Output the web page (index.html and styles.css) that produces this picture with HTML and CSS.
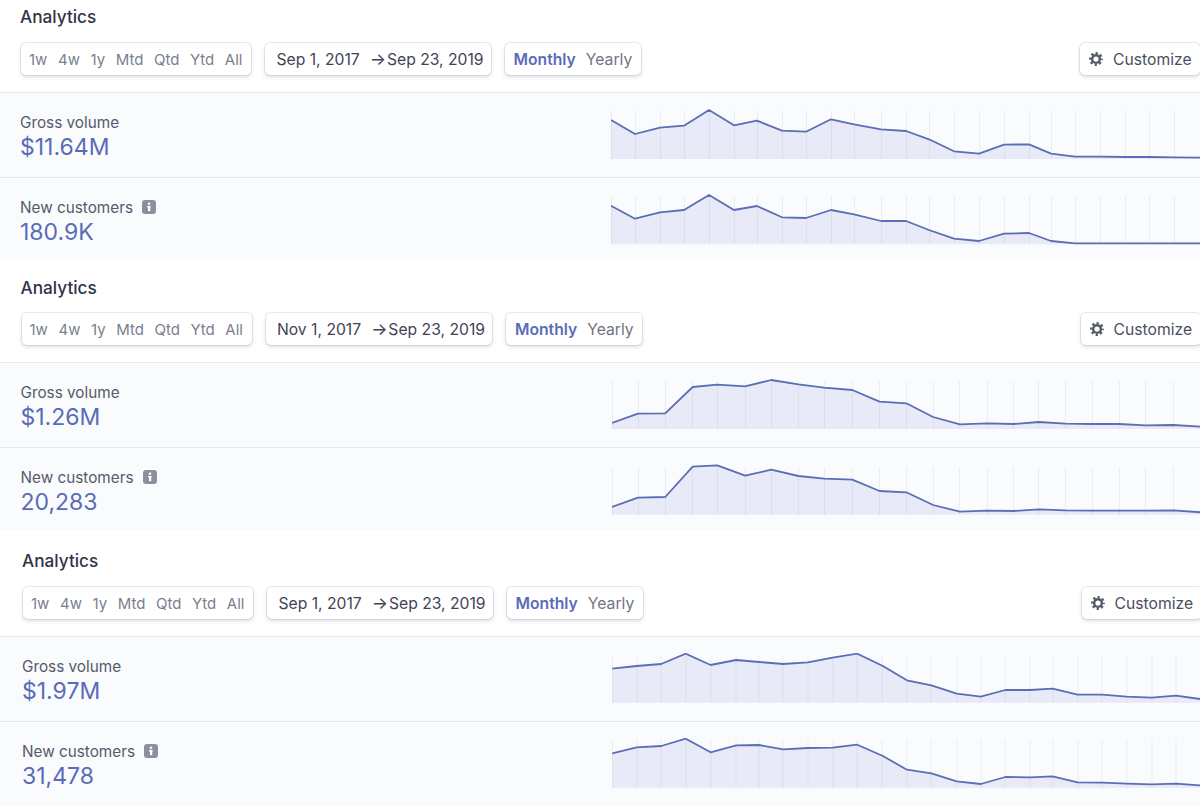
FILE: index.html
```html
<!DOCTYPE html>
<html lang="en">
<head>
  <meta charset="UTF-8">
  <title>Analytics</title>
  <link rel="stylesheet" href="styles.css">
</head>
<body>
  <svg class="defs" width="0" height="0">
    <symbol id="gear" viewBox="0 0 16 16">
      <circle cx="8" cy="8" r="4.4" fill="none" stroke="currentColor" stroke-width="2.8"/>
      <circle cx="8" cy="8" r="6.6" fill="none" stroke="currentColor" stroke-width="2.6" stroke-dasharray="2.6 2.58" stroke-dashoffset="1.3"/>
    </symbol>
    <symbol id="info" viewBox="0 0 14 14">
      <rect width="14" height="14" rx="3" fill="#8b90a0"/>
      <circle cx="7" cy="3.7" r="1.3" fill="#fff"/>
      <rect x="5" y="6" width="3.6" height="1.4" fill="#fff"/>
      <rect x="6" y="6" width="2.2" height="5.2" fill="#fff"/>
    </symbol>
  </svg>

  <section class="panel panel-top">
    <h2>Analytics</h2>
    <div class="toolbar">
      <div class="chip ranges"><span>1w</span><span>4w</span><span>1y</span><span>Mtd</span><span>Qtd</span><span>Ytd</span><span>All</span></div>
      <div class="chip dates"><span>Sep 1, 2017</span><span class="arrow">→</span><span>Sep 23, 2019</span></div>
      <div class="chip periods"><span class="active">Monthly</span><span>Yearly</span></div>
      <div class="chip customize"><svg class="gear"><use href="#gear"/></svg><span>Customize</span></div>
    </div>
    <div class="row">
      <div class="info">
        <div class="label">Gross volume</div>
        <div class="value">$11.64M</div>
      </div>
      <svg class="chart" viewBox="611 109 589 51">
        <polygon class="area" points="611,120 635,134 660,127.7 684,125.7 709,110 734,125.3 757,120.7 782,130.7 806,131.7 831,119.3 854,124.3 881,129.3 906,131 929,139.3 954,151.3 979,153.7 1004,144.7 1029,144.3 1051,153.7 1075,156.7 1100,156.7 1125,157 1149,157 1174,157.3 1200,157.7 1200,159 611,159"/>
        <path class="grid" d="M611.5 111V159M635.5 111V159M660.5 111V159M684.5 111V159M709.5 111V159M734.5 111V159M757.5 111V159M782.5 111V159M806.5 111V159M831.5 111V159M854.5 111V159M881.5 111V159M906.5 111V159M929.5 111V159M954.5 111V159M979.5 111V159M1004.5 111V159M1029.5 111V159M1051.5 111V159M1075.5 111V159M1100.5 111V159M1125.5 111V159M1149.5 111V159M1174.5 111V159"/>
        <polyline class="line" points="611,120 635,134 660,127.7 684,125.7 709,110 734,125.3 757,120.7 782,130.7 806,131.7 831,119.3 854,124.3 881,129.3 906,131 929,139.3 954,151.3 979,153.7 1004,144.7 1029,144.3 1051,153.7 1075,156.7 1100,156.7 1125,157 1149,157 1174,157.3 1200,157.7"/>
      </svg>
    </div>
    <div class="row last">
      <div class="info">
        <div class="label">New customers <svg class="info-icon"><use href="#info"/></svg></div>
        <div class="value">180.9K</div>
      </div>
      <svg class="chart" viewBox="611 194 589 51">
        <polygon class="area" points="611,205.7 635,218.7 660,212.3 684,210 709,195 734,210 757,206 782,217.3 806,218 831,210 854,214.3 881,221 906,221 929,230 954,238.7 979,241 1004,233.7 1029,233 1051,241 1075,243.3 1100,243.3 1125,243.3 1149,243.3 1174,243.3 1200,243.3 1200,244.3 611,244.3"/>
        <path class="grid" d="M611.5 196V244M635.5 196V244M660.5 196V244M684.5 196V244M709.5 196V244M734.5 196V244M757.5 196V244M782.5 196V244M806.5 196V244M831.5 196V244M854.5 196V244M881.5 196V244M906.5 196V244M929.5 196V244M954.5 196V244M979.5 196V244M1004.5 196V244M1029.5 196V244M1051.5 196V244M1075.5 196V244M1100.5 196V244M1125.5 196V244M1149.5 196V244M1174.5 196V244"/>
        <polyline class="line" points="611,205.7 635,218.7 660,212.3 684,210 709,195 734,210 757,206 782,217.3 806,218 831,210 854,214.3 881,221 906,221 929,230 954,238.7 979,241 1004,233.7 1029,233 1051,241 1075,243.3 1100,243.3 1125,243.3 1149,243.3 1174,243.3 1200,243.3"/>
      </svg>
    </div>
  </section>

  <section class="panel panel-mid">
    <h2>Analytics</h2>
    <div class="toolbar">
      <div class="chip ranges"><span>1w</span><span>4w</span><span>1y</span><span>Mtd</span><span>Qtd</span><span>Ytd</span><span>All</span></div>
      <div class="chip dates"><span>Nov 1, 2017</span><span class="arrow">→</span><span>Sep 23, 2019</span></div>
      <div class="chip periods"><span class="active">Monthly</span><span>Yearly</span></div>
      <div class="chip customize"><svg class="gear"><use href="#gear"/></svg><span>Customize</span></div>
    </div>
    <div class="row">
      <div class="info">
        <div class="label">Gross volume</div>
        <div class="value">$1.26M</div>
      </div>
      <svg class="chart" viewBox="611.5 379 588.5 51">
        <polygon class="area" points="611.5,423 637.5,413.7 664.7,413.3 692.2,387 716.7,384.7 744.7,386.3 770.7,380 797.9,384.3 823.5,387.7 851.8,390 879,401.7 905.8,403.3 932.6,417 959.4,424.3 986.5,423.3 1013.3,424 1038.2,422 1065,423.7 1091.8,424 1118.6,424 1145.3,425.3 1172.9,425 1200,426.7 1200,429 611.5,429"/>
        <path class="grid" d="M612 381V429M638 381V429M665 381V429M692 381V429M717 381V429M745 381V429M771 381V429M798 381V429M824 381V429M852 381V429M879 381V429M906 381V429M933 381V429M959 381V429M987 381V429M1013 381V429M1038 381V429M1065 381V429M1092 381V429M1119 381V429M1145 381V429M1173 381V429"/>
        <polyline class="line" points="611.5,423 637.5,413.7 664.7,413.3 692.2,387 716.7,384.7 744.7,386.3 770.7,380 797.9,384.3 823.5,387.7 851.8,390 879,401.7 905.8,403.3 932.6,417 959.4,424.3 986.5,423.3 1013.3,424 1038.2,422 1065,423.7 1091.8,424 1118.6,424 1145.3,425.3 1172.9,425 1200,426.7"/>
      </svg>
    </div>
    <div class="row last">
      <div class="info">
        <div class="label">New customers <svg class="info-icon"><use href="#info"/></svg></div>
        <div class="value">20,283</div>
      </div>
      <svg class="chart" viewBox="611.5 464 588.5 51">
        <polygon class="area" points="611.5,507 637.5,497.7 664.7,497 692.2,466.7 716.7,465.3 744.7,475.7 770.7,469.7 797.9,476 823.5,478.7 851.8,479.7 879,491 905.8,492.3 932.6,505 959.4,511.7 986.5,510.7 1013.3,511 1038.2,509.3 1065,510.3 1091.8,510.7 1118.6,510.7 1145.3,510.7 1172.9,510.3 1200,512.3 1200,514.7 611.5,514.7"/>
        <path class="grid" d="M612 467V515M638 467V515M665 467V515M692 467V515M717 467V515M745 467V515M771 467V515M798 467V515M824 467V515M852 467V515M879 467V515M906 467V515M933 467V515M959 467V515M987 467V515M1013 467V515M1038 467V515M1065 467V515M1092 467V515M1119 467V515M1145 467V515M1173 467V515"/>
        <polyline class="line" points="611.5,507 637.5,497.7 664.7,497 692.2,466.7 716.7,465.3 744.7,475.7 770.7,469.7 797.9,476 823.5,478.7 851.8,479.7 879,491 905.8,492.3 932.6,505 959.4,511.7 986.5,510.7 1013.3,511 1038.2,509.3 1065,510.3 1091.8,510.7 1118.6,510.7 1145.3,510.7 1172.9,510.3 1200,512.3"/>
      </svg>
    </div>
  </section>

  <section class="panel panel-low">
    <h2>Analytics</h2>
    <div class="toolbar">
      <div class="chip ranges"><span>1w</span><span>4w</span><span>1y</span><span>Mtd</span><span>Qtd</span><span>Ytd</span><span>All</span></div>
      <div class="chip dates"><span>Sep 1, 2017</span><span class="arrow">→</span><span>Sep 23, 2019</span></div>
      <div class="chip periods"><span class="active">Monthly</span><span>Yearly</span></div>
      <div class="chip customize"><svg class="gear"><use href="#gear"/></svg><span>Customize</span></div>
    </div>
    <div class="row">
      <div class="info">
        <div class="label">Gross volume</div>
        <div class="value">$1.97M</div>
      </div>
      <svg class="chart" viewBox="612 653 588 51">
        <polygon class="area" points="612.2,668.7 636.7,666 661.2,664 685.7,653.7 710.6,665 736.2,660 758.8,662 783.3,664 807.8,662.3 832.7,657.7 857.2,653.7 882.4,665.7 906.9,680.3 931.4,685.3 956.7,693.7 980.8,696.7 1005.3,690 1029.8,690 1052.7,688.7 1077.6,694.7 1102.1,694.7 1126.6,696.7 1151.5,697.7 1176,695.7 1200,699 1200,702.7 612.2,702.7"/>
        <path class="grid" d="M612.5 656V703M637 656V703M661 656V703M686 656V703M711 656V703M736 656V703M759 656V703M783 656V703M808 656V703M833 656V703M857 656V703M882 656V703M907 656V703M931 656V703M957 656V703M981 656V703M1005 656V703M1030 656V703M1053 656V703M1078 656V703M1102 656V703M1127 656V703M1152 656V703M1176 656V703"/>
        <polyline class="line" points="612.2,668.7 636.7,666 661.2,664 685.7,653.7 710.6,665 736.2,660 758.8,662 783.3,664 807.8,662.3 832.7,657.7 857.2,653.7 882.4,665.7 906.9,680.3 931.4,685.3 956.7,693.7 980.8,696.7 1005.3,690 1029.8,690 1052.7,688.7 1077.6,694.7 1102.1,694.7 1126.6,696.7 1151.5,697.7 1176,695.7 1200,699"/>
      </svg>
    </div>
    <div class="row last">
      <div class="info">
        <div class="label">New customers <svg class="info-icon"><use href="#info"/></svg></div>
        <div class="value">31,478</div>
      </div>
      <svg class="chart" viewBox="612 738 588 51">
        <polygon class="area" points="612.2,753.3 636.7,747.3 661.2,746 685.7,738.7 710.6,752.3 736.2,745.3 758.8,745 783.3,749.3 807.8,748 832.7,747.7 857.2,744.7 882.4,755.7 906.9,769.7 931.4,773.3 956.7,781.3 980.8,784 1005.3,777 1029.8,777.3 1052.7,776.3 1077.6,782.3 1102.1,782.7 1126.6,783.7 1151.5,784.3 1176,783.7 1200,785.3 1200,787.7 612.2,787.7"/>
        <path class="grid" d="M612.5 740V788M637 740V788M661 740V788M686 740V788M711 740V788M736 740V788M759 740V788M783 740V788M808 740V788M833 740V788M857 740V788M882 740V788M907 740V788M931 740V788M957 740V788M981 740V788M1005 740V788M1030 740V788M1053 740V788M1078 740V788M1102 740V788M1127 740V788M1152 740V788M1176 740V788"/>
        <polyline class="line" points="612.2,753.3 636.7,747.3 661.2,746 685.7,738.7 710.6,752.3 736.2,745.3 758.8,745 783.3,749.3 807.8,748 832.7,747.7 857.2,744.7 882.4,755.7 906.9,769.7 931.4,773.3 956.7,781.3 980.8,784 1005.3,777 1029.8,777.3 1052.7,776.3 1077.6,782.3 1102.1,782.7 1126.6,783.7 1151.5,784.3 1176,783.7 1200,785.3"/>
      </svg>
    </div>
  </section>
</body>
</html>
```

FILE: styles.css
```css
html, body {
  margin: 0;
  height: 806px;
  overflow: hidden;
  background: #fff;
}
body {
  font-family: Inter, "Liberation Sans", sans-serif;
  color: #3c4257;
}
.defs { position: absolute; }

.panel { --inset: 20px; --bleed: 0px; }
.panel-top { padding-top: 7px; }
.panel-mid { --inset: 20.5px; --bleed: -.5px; padding-top: 17px; }
.panel-low { --inset: 22px; --bleed: -1.5px; padding-top: 21px; }

h2 {
  margin: 0 0 16px var(--inset);
  font-size: 17.2px;
  font-weight: 500;
  line-height: 21px;
  height: 20px;
  color: #2f3446;
}
.panel-top h2, .panel-low h2 { line-height: 20px; }

.toolbar {
  display: flex;
  gap: 14px;
  height: 32px;
  padding: 0 0 17px calc(var(--inset) + 1px);
  margin-right: var(--bleed);
  border-bottom: 1px solid #e6e9ee;
}
.chip {
  display: flex;
  align-items: center;
  padding: 0 9px;
  background: #fff;
  border-radius: 5px;
  font-size: 15.7px;
  white-space: nowrap;
  box-shadow: 0 0 0 1px rgba(60, 66, 87, .1), 0 2px 4px rgba(60, 66, 87, .18);
}
.ranges { gap: 10.6px; padding: 0 9px 0 8px; font-size: 15px; color: #7a7f8e; }
.dates { padding: 0 7px 0 11px; color: #3f4455; }
.arrow { margin: 0 1px 0 10px; font-size: 17px; }
.periods { gap: 10px; padding-right: 8.5px; color: #6f7482; }
.periods .active { color: #5a6bb8; font-weight: 600; }
.customize {
  margin-left: auto;
  width: 120px;
  box-sizing: border-box;
  padding: 0 0 0 9px;
  gap: 10px;
  color: #4a4f60;
}
.gear { width: 14px; height: 14px; color: #555a69; }

.row {
  display: flex;
  height: 84px;
  padding-left: var(--inset);
  background: #f9fbfd;
  border-bottom: 1px solid #e6e9ee;
}
.row.last { height: 82px; border-bottom: 0; }
.panel-low .row.last { height: 84px; }
.info { width: 591px; flex: none; padding-top: 19px; box-sizing: border-box; }
.panel-low .info { width: 590px; }
.label {
  display: flex;
  align-items: center;
  gap: 9px;
  font-size: 15.3px;
  line-height: 21px;
  height: 20px;
  color: #555a69;
}
.info-icon { width: 14px; height: 14px; }
.value {
  font-size: 23px;
  line-height: 31px;
  color: #5a6bb8;
}
.chart { flex: 1; min-width: 0; height: 51px; margin-top: 16px; }
.area { fill: #e8ebf7; }
.grid { fill: none; stroke: rgba(60, 66, 87, .07); stroke-width: 1; }
.line { fill: none; stroke: #5c6db5; stroke-width: 1.8; stroke-linejoin: round; }
```
